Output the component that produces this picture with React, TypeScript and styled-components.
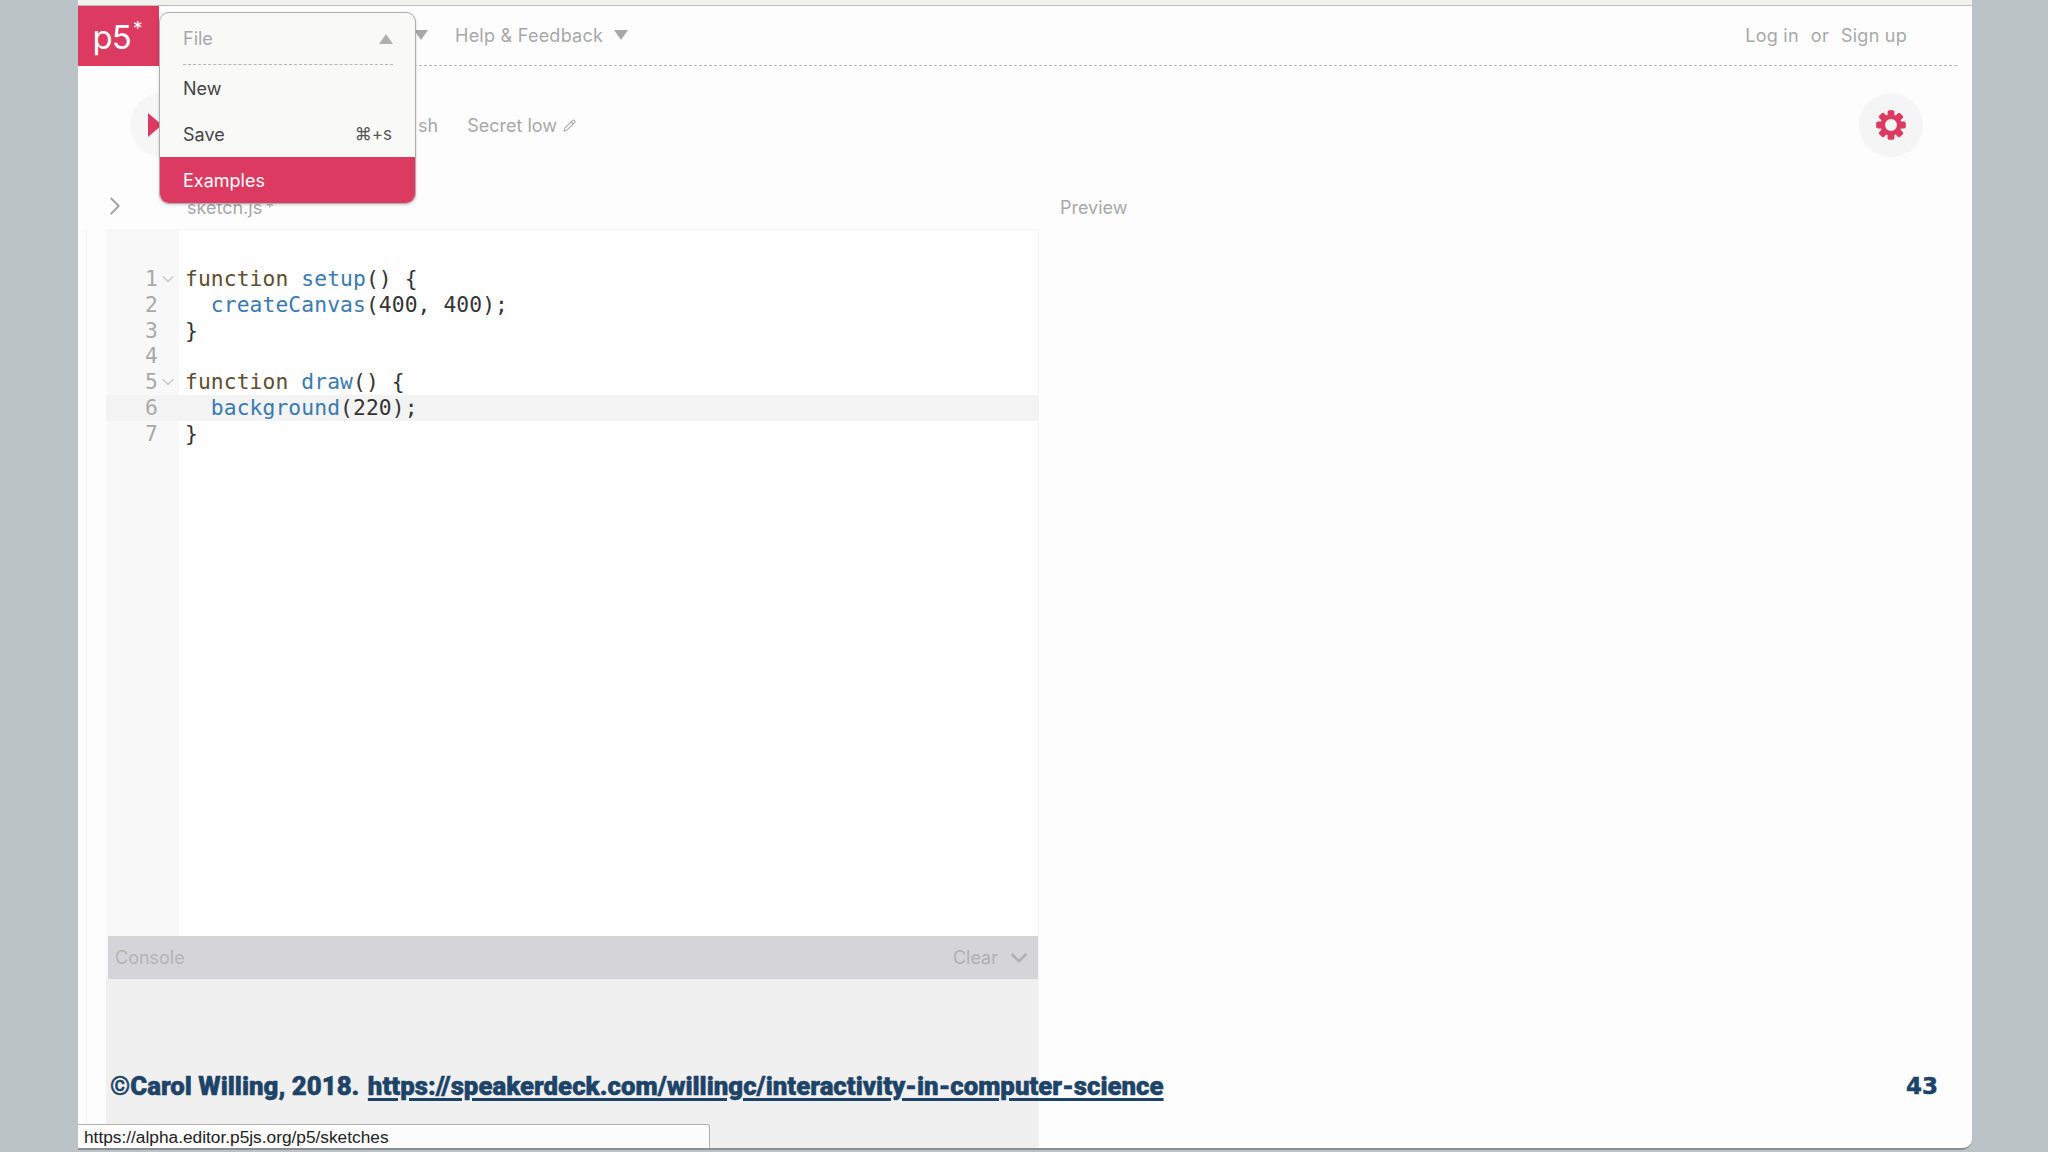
import styled, { createGlobalStyle } from 'styled-components'
import { ChevronRight, ChevronDown, Pencil } from 'lucide-react'

const PINK = '#dc3a60'
const UI_FONT = 'Inter, "Open Sans", sans-serif'

const GlobalStyle = createGlobalStyle`
  html, body { margin: 0; padding: 0; height: 100%; background: #bcc3c7; overflow: hidden; }
  * { box-sizing: border-box; }
`

const Page = styled.div`
  width: 2048px;
  height: 1152px;
  padding-left: 78px;
  font-family: ${UI_FONT};
`

const Window = styled.div`
  position: relative;
  width: 1894px;
  height: 1150px;
  background: #fdfdfe;
  border-bottom: 2px solid #8b8f92;
  border-bottom-right-radius: 10px;
  display: flex;
  flex-direction: column;
  overflow: hidden;
`

const TopStrip = styled.div`
  height: 6px;
  flex: none;
  background: #f1f1f0;
  border-bottom: 1px solid #bdbdbd;
`

// ─── Nav ─────────────────────────────────────────────────────────────────────

const Nav = styled.header`
  height: 60px;
  flex: none;
  display: flex;
`

const Logo = styled.div`
  width: 81px;
  background: ${PINK};
  color: #fff;
  font-size: 33px;
  font-weight: 400;
  letter-spacing: -1px;
  display: flex;
  justify-content: center;
  align-items: center;
  padding: 2px 3px 0 0;

  sup {
    font-size: 19px;
    line-height: 0;
    margin-left: 2px;
    position: relative;
    top: -8px;
  }
`

const NavBody = styled.nav`
  flex: 1;
  margin-right: 15px;
  border-bottom: 1.5px dashed #b5b5b5;
  display: flex;
  align-items: center;
  padding: 0 50px 1px 255px;
  color: #a8a8a8;
  font-size: 18px;
`

const Caret = styled.span<{ $up?: boolean; $gap?: number }>`
  width: 0;
  height: 0;
  margin-left: ${({ $gap }) => $gap ?? 0}px;
  border-left: 7px solid transparent;
  border-right: 7px solid transparent;
  ${({ $up }) => ($up ? 'border-bottom: 10px solid #b0b0b0;' : 'border-top: 10px solid #a8a8a8;')}
`

const NavLabel = styled.span<{ $gap?: number }>`
  margin-left: ${({ $gap }) => $gap ?? 0}px;
  letter-spacing: 0.25px;
`

const Spacer = styled.span`
  flex: 1;
`

// ─── Toolbar ─────────────────────────────────────────────────────────────────

const Toolbar = styled.div`
  height: 120px;
  flex: none;
  display: flex;
  align-items: center;
  padding: 0 49px 2px 52px;
  color: #a8a8a8;
  font-size: 18px;
`

const PlayButton = styled.div`
  width: 64px;
  height: 64px;
  border-radius: 50%;
  background: #f6f6f6;
  flex: none;
  display: flex;
  align-items: center;
  padding-left: 18px;

  &::before {
    content: '';
    border-top: 12px solid transparent;
    border-bottom: 12px solid transparent;
    border-left: 14px solid ${PINK};
  }
`

const ToolbarLabel = styled.span<{ $gap: number }>`
  margin-left: ${({ $gap }) => $gap}px;
`

const SketchName = styled.span`
  margin-left: 29px;
  display: flex;
  align-items: center;
  gap: 6px;
`

const GearButton = styled.div`
  width: 64px;
  height: 64px;
  border-radius: 50%;
  background: #f5f5f5;
  display: flex;
  align-items: center;
  justify-content: center;
`

// ─── Editor area ─────────────────────────────────────────────────────────────

const Workspace = styled.main`
  flex: 1;
  display: flex;
  min-height: 0;
`

const EditorColumn = styled.section`
  width: 961px;
  flex: none;
  padding-left: 28px;
  display: flex;
  flex-direction: column;
`

const TabRow = styled.div`
  height: 43px;
  flex: none;
  position: relative;
  display: flex;
  align-items: center;
  padding-left: 81px;
  color: #a8a8a8;
  font-size: 18px;
  word-spacing: -2px;
`

const SidebarToggle = styled.span`
  position: absolute;
  left: -6px;
  top: 5px;
  color: #a4a4a4;
`

const Editor = styled.div`
  position: relative;
  flex: 1;
  min-height: 0;
  display: flex;
  flex-direction: column;
  border-top: 1px solid #f5f5f5;
  border-right: 1px solid #f3f3f3;
  background: linear-gradient(to right, #f8f8f8 73px, #fefefe 73px);
  padding-top: 36px;
  font-family: "DejaVu Sans Mono", "Liberation Mono", monospace;
  font-size: 21.3px;
  letter-spacing: 0.1px;

  &::before {
    content: '';
    position: absolute;
    left: -20px;
    top: 0;
    bottom: 0;
    width: 1px;
    background: #f0f0f0;
  }
`

const CodeLine = styled.div<{ $active?: boolean }>`
  height: 25.8px;
  line-height: 25.8px;
  display: flex;
  white-space: pre;
  background: ${({ $active }) => ($active ? '#f3f3f4' : 'transparent')};
`

const LineNumber = styled.span`
  width: 52px;
  flex: none;
  text-align: right;
  color: #a9a9a9;
`

const FoldMark = styled.span`
  width: 27px;
  flex: none;
  color: #c4c4c4;
  display: flex;
  align-items: center;
`

const Keyword = styled.span`
  color: #5f4d30;
`

const Fn = styled.span`
  color: #3a7ab0;
`

const Plain = styled.span`
  color: #333;
`

const ConsoleBar = styled.div`
  margin-top: auto;
  margin-left: 2px;
  height: 43px;
  flex: none;
  background: #d5d5d7;
  display: flex;
  align-items: center;
  padding: 0 6px 0 7px;
  color: #b4b4b6;
  font-family: ${UI_FONT};
  font-size: 18px;
  letter-spacing: 0;
`

const ConsoleClear = styled.span`
  margin-left: auto;
  display: flex;
  align-items: center;
  gap: 8px;
  color: #b0b0b2;
`

const ConsoleBody = styled.div`
  height: 169px;
  flex: none;
  background: #f0f0f0;
`

const PreviewColumn = styled.section`
  flex: 1;
  height: 43px;
  display: flex;
  align-items: center;
  padding-left: 21px;
  color: #a8a8a8;
  font-size: 18px;
`

// ─── Dropdown ────────────────────────────────────────────────────────────────

const Menu = styled.div`
  position: absolute;
  left: 81px;
  top: 12px;
  width: 257px;
  height: 192px;
  background: #f9f9f8;
  border: 1px solid #aeaeae;
  border-radius: 10px;
  box-shadow: 0 1px 3px rgba(0, 0, 0, 0.18);
  overflow: hidden;
  font-size: 18px;
  color: #444;
`

const MenuHeader = styled.div`
  height: 52px;
  margin: 0 22px 0 23px;
  border-bottom: 1.5px dashed #b5b5b5;
  display: flex;
  align-items: center;
  justify-content: space-between;
  color: #a8a8a8;
`

const MenuItem = styled.div<{ $selected?: boolean }>`
  height: 46px;
  display: flex;
  align-items: center;
  justify-content: space-between;
  padding: 0 23px;
  background: ${({ $selected }) => ($selected ? PINK : 'transparent')};
  color: ${({ $selected }) => ($selected ? '#fff' : '#444')};
`

const Shortcut = styled.span`
  font-size: 17px;
  color: #555;
`

// ─── Overlays ────────────────────────────────────────────────────────────────

const Caption = styled.div`
  position: absolute;
  left: 32px;
  right: 34px;
  top: 1071px;
  display: flex;
  justify-content: space-between;
  align-items: center;
  color: #1d4468;
  font-family: Roboto, "Liberation Sans", sans-serif;
  font-size: 25.8px;
  font-weight: 900;
  -webkit-text-stroke: 0.5px #1d4468;
  white-space: nowrap;

  a {
    margin-left: 2px;
    color: inherit;
    text-decoration: underline;
    text-decoration-thickness: 3px;
    text-underline-offset: 3px;
  }
`

const SlideNumber = styled.span`
  font-family: "DejaVu Sans", sans-serif;
  font-size: 23px;
  font-weight: 700;
`

const StatusBubble = styled.div`
  position: absolute;
  left: 0;
  bottom: -2px;
  width: 632px;
  height: 26px;
  background: #fcfcfc;
  border: 1px solid #b0b0b0;
  border-left: none;
  border-top-right-radius: 3px;
  padding-left: 6px;
  display: flex;
  align-items: center;
  color: #222;
  font-family: "Liberation Sans", Arial, sans-serif;
  font-size: 17.3px;
`

const CODE: { n: number; fold?: boolean; active?: boolean; parts: [typeof Keyword | typeof Fn | typeof Plain, string][] }[] = [
  { n: 1, fold: true, parts: [[Keyword, 'function '], [Fn, 'setup'], [Plain, '() {']] },
  { n: 2, parts: [[Plain, '  '], [Fn, 'createCanvas'], [Plain, '(400, 400);']] },
  { n: 3, parts: [[Plain, '}']] },
  { n: 4, parts: [] },
  { n: 5, fold: true, parts: [[Keyword, 'function '], [Fn, 'draw'], [Plain, '() {']] },
  { n: 6, active: true, parts: [[Plain, '  '], [Fn, 'background'], [Plain, '(220);']] },
  { n: 7, parts: [[Plain, '}']] },
]

function Gear() {
  const teeth = [0, 45, 90, 135, 180, 225, 270, 315]
  return (
    <svg width="30" height="30" viewBox="0 0 30 30">
      {teeth.map(a => (
        <rect key={a} x="11.6" y="0.2" width="6.8" height="8" rx="1.6" fill={PINK} transform={`rotate(${a} 15 15)`} />
      ))}
      <circle cx="15" cy="15" r="8.3" fill="none" stroke={PINK} strokeWidth="4.6" />
    </svg>
  )
}

export default function App() {
  return (
    <Page>
      <GlobalStyle />
      <Window>
        <TopStrip />
        <Nav>
          <Logo>p5<sup>*</sup></Logo>
          <NavBody>
            <Caret />
            <NavLabel $gap={27}>Help &amp; Feedback</NavLabel>
            <Caret $gap={11} />
            <Spacer />
            <NavLabel>Log in</NavLabel>
            <NavLabel $gap={12}>or</NavLabel>
            <NavLabel $gap={12}>Sign up</NavLabel>
          </NavBody>
        </Nav>
        <Toolbar>
          <PlayButton />
          <ToolbarLabel $gap={224}>sh</ToolbarLabel>
          <SketchName>
            Secret low
            <Pencil size={13} />
          </SketchName>
          <Spacer />
          <GearButton><Gear /></GearButton>
        </Toolbar>
        <Workspace>
          <EditorColumn>
            <TabRow>
              <SidebarToggle><ChevronRight size={30} strokeWidth={1.5} /></SidebarToggle>
              sketch.js *
            </TabRow>
            <Editor>
              {CODE.map(line => (
                <CodeLine key={line.n} $active={line.active}>
                  <LineNumber>{line.n}</LineNumber>
                  <FoldMark>{line.fold && <ChevronDown size={20} strokeWidth={1.3} />}</FoldMark>
                  {line.parts.map(([Part, text], i) => <Part key={i}>{text}</Part>)}
                </CodeLine>
              ))}
              <ConsoleBar>
                Console
                <ConsoleClear>Clear <ChevronDown size={26} strokeWidth={2.4} /></ConsoleClear>
              </ConsoleBar>
              <ConsoleBody />
            </Editor>
          </EditorColumn>
          <PreviewColumn>Preview</PreviewColumn>
        </Workspace>
        <Menu>
          <MenuHeader>File <Caret $up /></MenuHeader>
          <MenuItem>New</MenuItem>
          <MenuItem>Save <Shortcut>⌘+s</Shortcut></MenuItem>
          <MenuItem $selected>Examples</MenuItem>
        </Menu>
        <Caption>
          <span>©Carol Willing, 2018. <a href="#">https://speakerdeck.com/willingc/interactivity-in-computer-science</a></span>
          <SlideNumber>43</SlideNumber>
        </Caption>
        <StatusBubble>https://alpha.editor.p5js.org/p5/sketches</StatusBubble>
      </Window>
    </Page>
  )
}
